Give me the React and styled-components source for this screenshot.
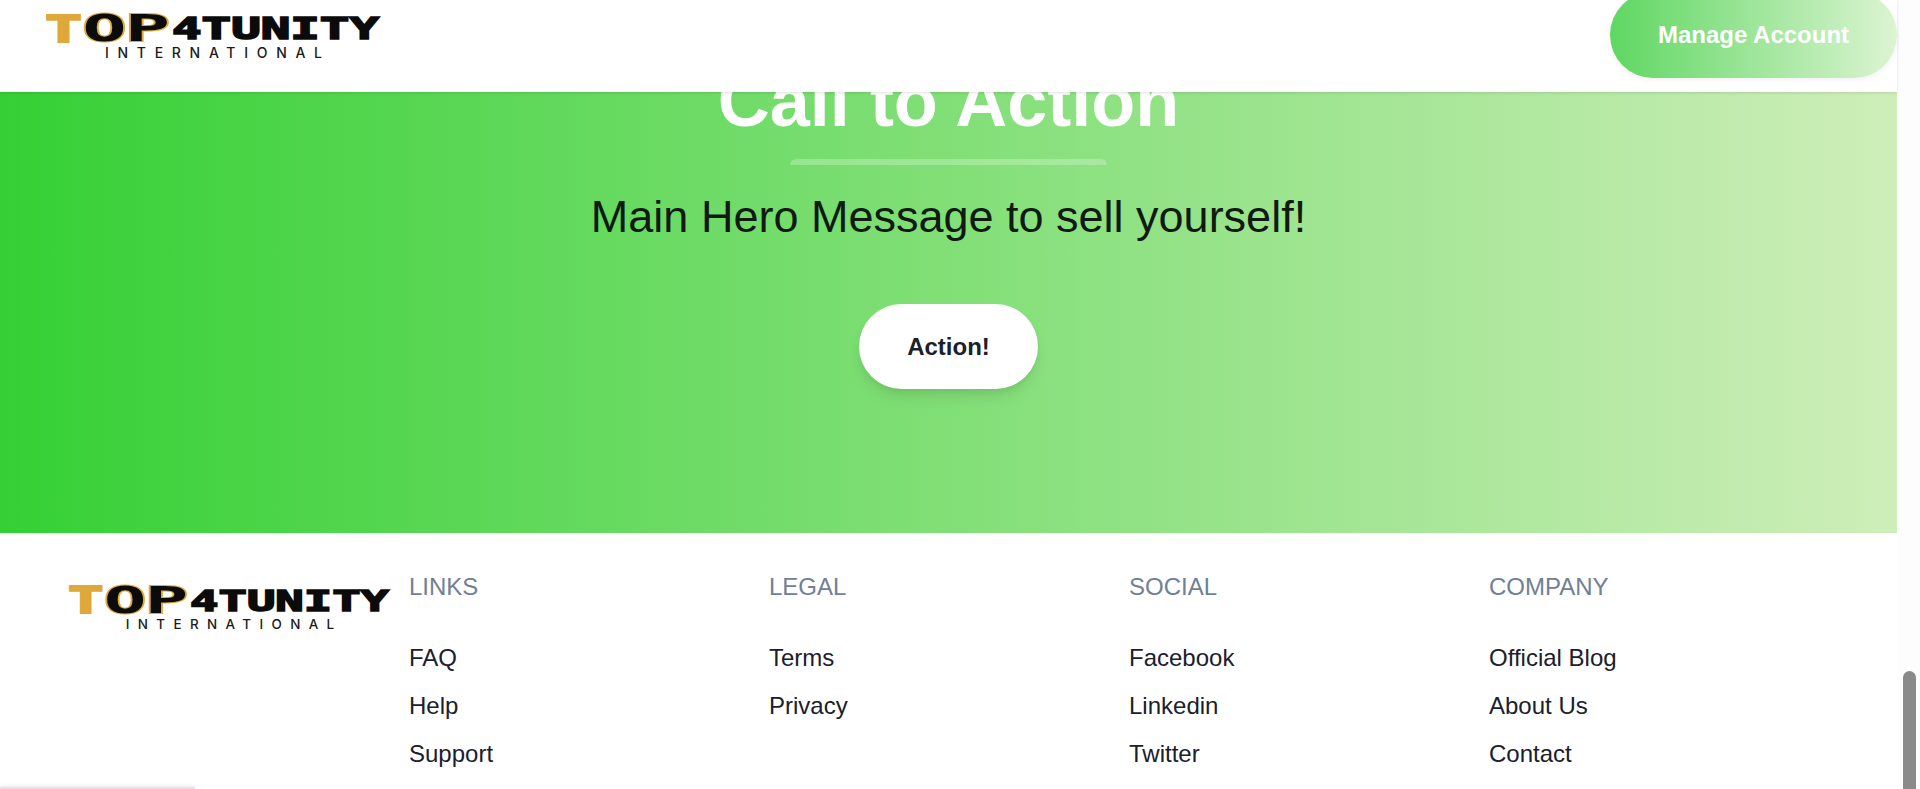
import styled, { createGlobalStyle } from 'styled-components'

const GlobalStyle = createGlobalStyle`
html, body {
  margin: 0;
  padding: 0;
  height: 789px;
  overflow: hidden;
  background: #fff;
  font-family: "Liberation Sans", Arial, sans-serif;
}
`

const Shell = styled.div`
width: 1920px;
height: 789px;
display: flex;
position: relative;
overflow: hidden;
`

const Page = styled.div`
flex: 1;
min-width: 0;
display: flex;
flex-direction: column;
`

const ScrollTrack = styled.div`
width: 23px;
display: flex;
flex-direction: column;
justify-content: flex-end;
align-items: center;
background: #fdfdfd;
`

const ScrollThumb = styled.div`
width: 13px;
height: 118px;
margin-left: 1px;
border-radius: 7px 7px 0 0;
background: #8a8a8a;
`

const Header = styled.header`
height: 92px;
flex-shrink: 0;
display: flex;
justify-content: space-between;
align-items: flex-start;
padding-left: 46px;
background: #fff;
position: relative;
z-index: 2;
box-shadow: 0 1px 3px rgba(0, 0, 0, 0.12);
`

const LogoWrap = styled.div`
width: ${props => props.$width}px;
margin-top: ${props => props.$top}px;
flex-shrink: 0;

svg {
  display: block;
  width: 100%;
  height: auto;
  overflow: visible;
}
`

const ManageButton = styled.button`
width: 287px;
height: 86px;
margin-top: -8px;
border: none;
border-radius: 43px;
background: linear-gradient(90deg, #5fd762, #dcf4d2);
color: #fff;
font-family: inherit;
font-size: 24px;
font-weight: 700;
box-shadow: 0 2px 6px rgba(0, 0, 0, 0.06);
`

const Hero = styled.section`
height: 441px;
flex-shrink: 0;
display: flex;
flex-direction: column;
align-items: center;
overflow: hidden;
background: linear-gradient(90deg, #35d035, #ceeeb9);
`

const Title = styled.h1`
margin: -36px 0 0;
font-size: 72px;
line-height: 90px;
font-weight: 700;
color: #fff;
`

const Divider = styled.div`
width: 317px;
height: 6px;
margin-top: 13px;
border-radius: 6px 6px 0 0;
background: rgba(255, 255, 255, 0.25);
`

const Message = styled.p`
margin: 25px 0 0;
font-size: 45px;
line-height: 54px;
color: #101a12;
`

const ActionButton = styled.button`
width: 179px;
height: 85px;
margin-top: 60px;
border: none;
border-radius: 43px;
background: #fff;
color: #1a202c;
font-family: inherit;
font-size: 24px;
font-weight: 700;
box-shadow: 0 10px 15px -3px rgba(0, 0, 0, 0.1), 0 4px 6px -2px rgba(0, 0, 0, 0.05);
`

const Footer = styled.footer`
flex: 1;
min-height: 0;
display: flex;
align-items: flex-start;
padding-left: 69px;
overflow: hidden;
background: #fff;
`

const Columns = styled.div`
display: grid;
grid-template-columns: repeat(4, 360px);
margin-left: 20px;
padding-top: 40px;
`

const Column = styled.div`
display: flex;
flex-direction: column;
`

const ColumnTitle = styled.div`
font-size: 24px;
line-height: 28px;
color: #718096;
text-transform: uppercase;
margin-bottom: 43px;
`

const FooterLink = styled.a`
font-size: 24px;
line-height: 28px;
margin-bottom: 20px;
color: #1a202c;
text-decoration: none;
`

const PinkSliver = styled.div`
position: absolute;
left: 0;
bottom: 0;
width: 195px;
height: 2px;
border-radius: 0 3px 0 0;
background: #f5d9ea;
box-shadow: 0 0 4px rgba(0, 0, 0, 0.2);
`

const mono = '"DejaVu Sans Mono", monospace'

const Logo = () => (
  <svg viewBox="0 0 333 46" role="img" aria-label="TOP4TUNITY International">
    <text x="-1" y="28.5" fontFamily={mono} fontWeight="700" fontSize="38" textLength="37" lengthAdjust="spacingAndGlyphs" fill="#dfa83a" stroke="#dfa83a" strokeWidth="2">T</text>
    <text x="36.5" y="28" fontFamily={mono} fontWeight="700" fontSize="38" textLength="44" lengthAdjust="spacingAndGlyphs" fill="#0b0b0b" stroke="#dfa83a" strokeWidth="2" paintOrder="stroke">O</text>
    <text x="79" y="28" fontFamily={mono} fontWeight="700" fontSize="38" textLength="45" lengthAdjust="spacingAndGlyphs" fill="#0b0b0b" stroke="#dfa83a" strokeWidth="2" paintOrder="stroke">P</text>
    <text x="126" y="26" fontFamily={mono} fontWeight="700" fontSize="30" textLength="207" lengthAdjust="spacingAndGlyphs" fill="#0b0b0b" stroke="#0b0b0b" strokeWidth="1.6">4TUNITY</text>
    <text x="59" y="45" fontFamily='"Inter", sans-serif' fontWeight="500" fontSize="14" textLength="217" lengthAdjust="spacing" fill="#1a1a1a">INTERNATIONAL</text>
  </svg>
)

const columns = [
  { title: 'Links', items: ['FAQ', 'Help', 'Support'] },
  { title: 'Legal', items: ['Terms', 'Privacy'] },
  { title: 'Social', items: ['Facebook', 'Linkedin', 'Twitter'] },
  { title: 'Company', items: ['Official Blog', 'About Us', 'Contact'] },
]

const App = () => {
  return (
    <Shell>
      <GlobalStyle />
      <Page>
        <Header>
          <LogoWrap $width={333} $top={13}>
            <Logo />
          </LogoWrap>
          <ManageButton>Manage Account</ManageButton>
        </Header>
        <Hero>
          <Title>Call to Action</Title>
          <Divider />
          <Message>Main Hero Message to sell yourself!</Message>
          <ActionButton>Action!</ActionButton>
        </Hero>
        <Footer>
          <LogoWrap $width={320} $top={53}>
            <Logo />
          </LogoWrap>
          <Columns>
            {columns.map(col => (
              <Column key={col.title}>
                <ColumnTitle>{col.title}</ColumnTitle>
                {col.items.map(item => (
                  <FooterLink key={item} href="#">{item}</FooterLink>
                ))}
              </Column>
            ))}
          </Columns>
        </Footer>
      </Page>
      <ScrollTrack>
        <ScrollThumb />
      </ScrollTrack>
      <PinkSliver />
    </Shell>
  )
}

export default App
